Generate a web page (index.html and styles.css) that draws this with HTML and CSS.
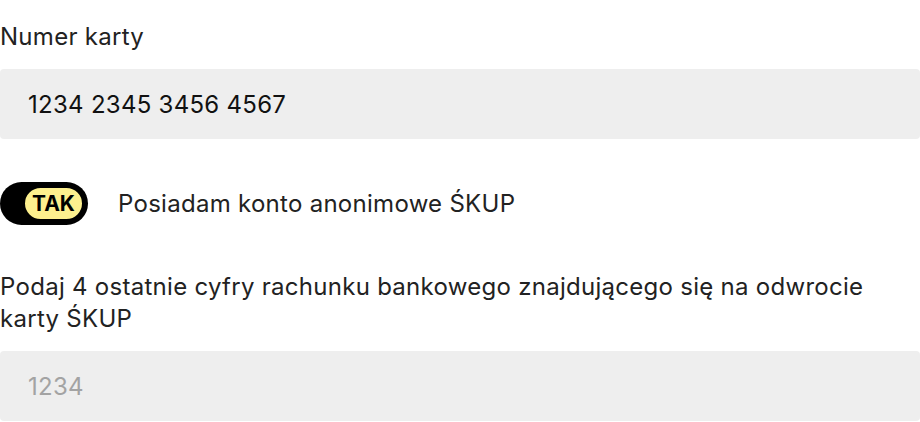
FILE: index.html
```html
<!DOCTYPE html>
<html lang="pl">
<head>
    <meta charset="UTF-8">
    <meta name="viewport" content="width=device-width, initial-scale=1.0">
    <title>Karta ŚKUP</title>
    <link rel="stylesheet" href="styles.css">
</head>
<body>
    <form class="card-form">
        <div class="field">
            <label class="field-label" for="cardNumber">Numer karty</label>
            <input class="field-input" id="cardNumber" type="text" value="1234 2345 3456 4567">
        </div>
        <label class="switch-row">
            <span class="switch">
                <span class="switch-knob">TAK</span>
            </span>
            <span class="switch-text">Posiadam konto anonimowe ŚKUP</span>
        </label>
        <div class="field">
            <label class="field-label" for="accountDigits">Podaj 4 ostatnie cyfry rachunku bankowego znajdującego się na odwrocie karty ŚKUP</label>
            <input class="field-input" id="accountDigits" type="text" placeholder="1234">
        </div>
    </form>
</body>
</html>
```

FILE: styles.css
```css
* {
    margin: 0;
    padding: 0;
    box-sizing: border-box;
    -webkit-font-smoothing: antialiased;
    font-family: Inter, "Noto Sans", Arial, sans-serif;
    letter-spacing: 0.28px;
}
html, body {
    width: 100%;
    height: 100%;
    background: #fff;
    overflow: hidden;
}
.card-form {
    display: flex;
    flex-direction: column;
    padding-top: 21px;
}
.field {
    display: flex;
    flex-direction: column;
}
.field-label {
    font-size: 24px;
    line-height: 32px;
    color: #222;
    margin-bottom: 16px;
    max-width: 880px;
}
.field-input {
    width: 100%;
    height: 70px;
    border: none;
    outline: none;
    border-radius: 4px;
    background: #eeeeee;
    padding: 0 28px;
    font-size: 24px;
    color: #111;
}
.field-input::placeholder {
    color: #a3a3a3;
}
.switch-row {
    display: flex;
    align-items: center;
    gap: 30px;
    margin: 43px 0 46px;
    cursor: pointer;
}
.switch {
    display: flex;
    justify-content: flex-end;
    align-items: center;
    width: 88px;
    height: 43px;
    padding: 3px;
    border-radius: 22px;
    background: #000;
}
.switch-knob {
    display: flex;
    justify-content: center;
    align-items: center;
    width: 63px;
    height: 37px;
    border-radius: 19px;
    border: 3px solid #000;
    background: #fdf08e;
    font-size: 21px;
    font-weight: 700;
    color: #000;
    letter-spacing: 0;
}
.switch-text {
    font-size: 24px;
    color: #222;
}
```
